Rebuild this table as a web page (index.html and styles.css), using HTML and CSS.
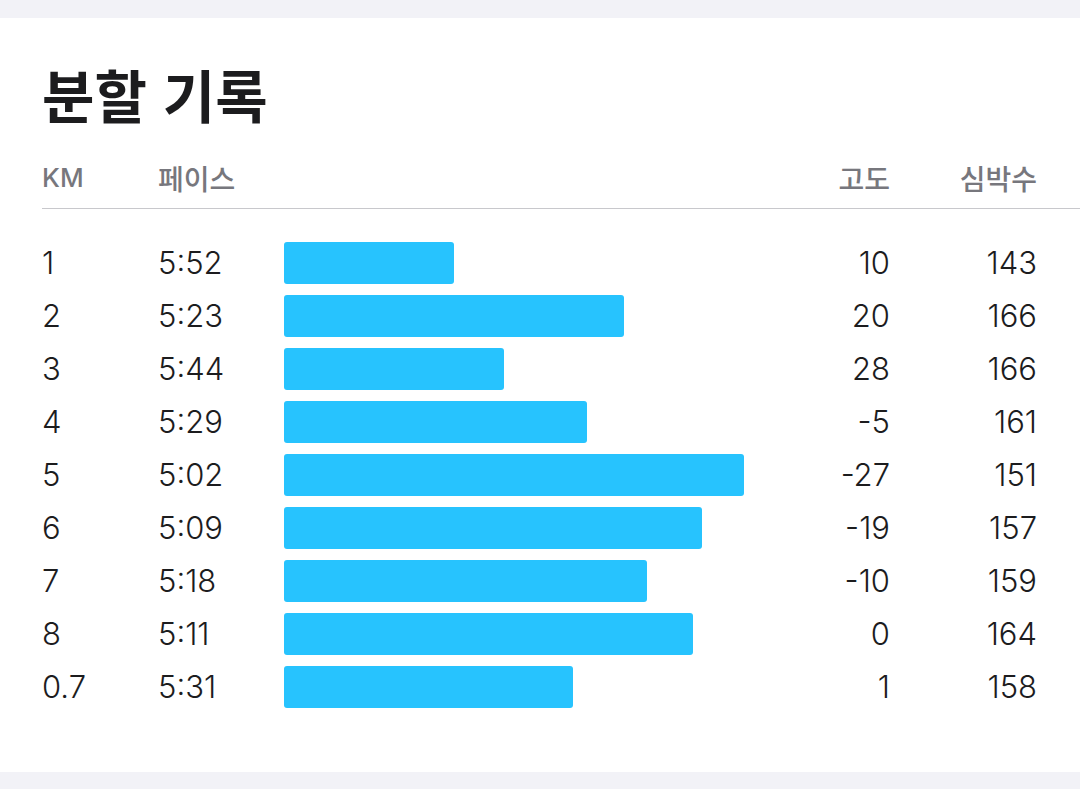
FILE: index.html
```html
<!DOCTYPE html>
<html lang="ko">
<head>
<meta charset="utf-8">
<link rel="stylesheet" href="styles.css">
</head>
<body>
<div class="page">
  <section class="card">
    <h1 class="title">분할 기록</h1>
    <div class="table">
      <div class="row head">
        <div class="c-km">KM</div>
        <div class="c-pace ko">페이스</div>
        <div class="c-bar"></div>
        <div class="c-alt ko">고도</div>
        <div class="c-hr ko">심박수</div>
      </div>
      <div class="rows">
        <div class="row"><div class="c-km">1</div><div class="c-pace">5:52</div><div class="c-bar"><span class="bar" style="width:170px"></span></div><div class="c-alt">10</div><div class="c-hr">143</div></div>
        <div class="row"><div class="c-km">2</div><div class="c-pace">5:23</div><div class="c-bar"><span class="bar" style="width:340px"></span></div><div class="c-alt">20</div><div class="c-hr">166</div></div>
        <div class="row"><div class="c-km">3</div><div class="c-pace">5:44</div><div class="c-bar"><span class="bar" style="width:220px"></span></div><div class="c-alt">28</div><div class="c-hr">166</div></div>
        <div class="row"><div class="c-km">4</div><div class="c-pace">5:29</div><div class="c-bar"><span class="bar" style="width:303px"></span></div><div class="c-alt">-5</div><div class="c-hr">161</div></div>
        <div class="row"><div class="c-km">5</div><div class="c-pace">5:02</div><div class="c-bar"><span class="bar" style="width:460px"></span></div><div class="c-alt">-27</div><div class="c-hr">151</div></div>
        <div class="row"><div class="c-km">6</div><div class="c-pace">5:09</div><div class="c-bar"><span class="bar" style="width:418px"></span></div><div class="c-alt">-19</div><div class="c-hr">157</div></div>
        <div class="row"><div class="c-km">7</div><div class="c-pace">5:18</div><div class="c-bar"><span class="bar" style="width:363px"></span></div><div class="c-alt">-10</div><div class="c-hr">159</div></div>
        <div class="row"><div class="c-km">8</div><div class="c-pace">5:11</div><div class="c-bar"><span class="bar" style="width:409px"></span></div><div class="c-alt">0</div><div class="c-hr">164</div></div>
        <div class="row"><div class="c-km">0.7</div><div class="c-pace">5:31</div><div class="c-bar"><span class="bar" style="width:289px"></span></div><div class="c-alt">1</div><div class="c-hr">158</div></div>
      </div>
    </div>
  </section>
</div>
</body>
</html>
```
FILE: styles.css
```css
* { box-sizing: border-box; }
html, body { margin: 0; padding: 0; }
body {
  background: #f2f2f7;
  font-family: Inter, "Noto Sans CJK KR", sans-serif;
  color: #1c1c1e;
}
.page {
  width: 1080px;
  height: 789px;
  padding-top: 18px;
}
.card {
  background: #ffffff;
  height: 754px;
  padding: 42px 0 0 42px;
}
.title {
  margin: 0;
  font-family: "Noto Sans CJK KR", sans-serif;
  font-weight: 700;
  font-size: 57px;
  line-height: 66px;
  color: #1c1c1e;
}
.table {
  margin-top: 21px;
}
.row {
  display: grid;
  grid-template-columns: 116px 126px 1fr 120px 147px;
  align-items: center;
  padding-right: 43px;
}
.head {
  height: 62px;
  border-bottom: 1px solid #c8c8cc;
  font-family: Inter, "Noto Sans CJK KR", sans-serif;
  font-size: 26px;
  font-weight: 500;
  color: #77777d;
}
.head .ko {
  font-family: "Noto Sans CJK KR", sans-serif;
  font-weight: 500;
  font-size: 28px;
}
.rows {
  padding-top: 27px;
}
.rows .row {
  height: 53px;
  font-size: 31px;
  font-weight: 300;
  color: #1c1c1e;
}
.c-alt, .c-hr { text-align: right; }
.c-bar { display: flex; align-items: center; }
.bar {
  display: block;
  height: 42px;
  background: #27c3fe;
  border-radius: 3px;
}
```
